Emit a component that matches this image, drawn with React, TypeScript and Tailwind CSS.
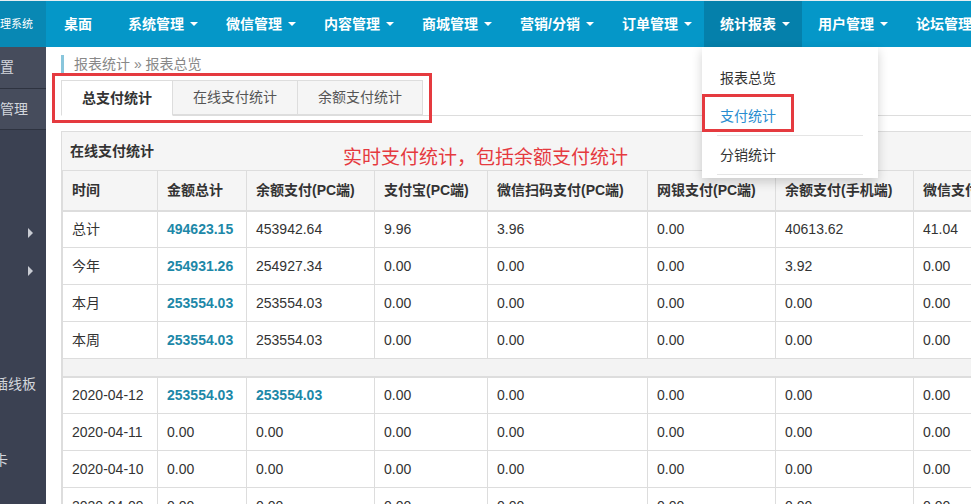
import React from 'react';

const FONT = { fontFamily: '"Liberation Sans", Arial, "Noto Sans CJK SC", sans-serif' };

const NAV = [
  { label: '桌面', caret: false },
  { label: '系统管理', caret: true },
  { label: '微信管理', caret: true },
  { label: '内容管理', caret: true },
  { label: '商城管理', caret: true },
  { label: '营销/分销', caret: true },
  { label: '订单管理', caret: true },
  { label: '统计报表', caret: true, active: true },
  { label: '用户管理', caret: true },
  { label: '论坛管理', caret: false },
];

const COLS = [
  { label: '时间', w: 95 },
  { label: '金额总计', w: 89 },
  { label: '余额支付(PC端)', w: 128 },
  { label: '支付宝(PC端)', w: 113 },
  { label: '微信扫码支付(PC端)', w: 160 },
  { label: '网银支付(PC端)', w: 128 },
  { label: '余额支付(手机端)', w: 138 },
  { label: '微信支付(手机端)', w: 140 },
];

type Row = { cells: string[]; bold?: number[] };

const SUMMARY: Row[] = [
  { cells: ['总计', '494623.15', '453942.64', '9.96', '3.96', '0.00', '40613.62', '41.04'], bold: [1] },
  { cells: ['今年', '254931.26', '254927.34', '0.00', '0.00', '0.00', '3.92', '0.00'], bold: [1] },
  { cells: ['本月', '253554.03', '253554.03', '0.00', '0.00', '0.00', '0.00', '0.00'], bold: [1] },
  { cells: ['本周', '253554.03', '253554.03', '0.00', '0.00', '0.00', '0.00', '0.00'], bold: [1] },
];

const DAILY: Row[] = [
  { cells: ['2020-04-12', '253554.03', '253554.03', '0.00', '0.00', '0.00', '0.00', '0.00'], bold: [1, 2] },
  { cells: ['2020-04-11', '0.00', '0.00', '0.00', '0.00', '0.00', '0.00', '0.00'] },
  { cells: ['2020-04-10', '0.00', '0.00', '0.00', '0.00', '0.00', '0.00', '0.00'] },
  { cells: ['2020-04-09', '0.00', '0.00', '0.00', '0.00', '0.00', '0.00', '0.00'] },
];

function Caret() {
  return (
    <span className="ml-[6px] inline-block h-0 w-0 border-x-4 border-t-4 border-x-transparent border-t-white align-middle" />
  );
}

function DataRow({ row }: { row: Row }) {
  return (
    <tr className="h-[37px]">
      {row.cells.map((c, i) => (
        <td
          key={i}
          className={`border border-[#dddddd] px-[9px] ${
            row.bold?.includes(i) ? 'font-bold text-[#1d88a8]' : 'text-[#333333]'
          }`}
        >
          {c}
        </td>
      ))}
    </tr>
  );
}

export default function App() {
  return (
    <div className="relative h-[504px] w-[971px] overflow-hidden bg-white text-[14px]" style={FONT}>
      {/* top bar */}
      <div className="flex h-[47px] border-t border-[#e6eef2] bg-[#0597c8]">
        <div className="flex w-[46px] shrink-0 items-center justify-end overflow-hidden bg-[#0888b4] pr-[13px] text-[11px] whitespace-nowrap text-white">
          管理系统
        </div>
        <div className="flex shrink-0 pl-[2px]">
          {NAV.map((n) => (
            <div
              key={n.label}
              className={`flex shrink-0 items-center whitespace-nowrap pl-4 font-bold text-white ${
                n.caret ? 'pr-3' : 'pr-5'
              } ${n.active ? 'bg-[#0580ab]' : ''}`}
            >
              {n.label}
              {n.caret ? <Caret /> : null}
            </div>
          ))}
        </div>
      </div>

      <div className="flex h-[457px]">
        {/* sidebar */}
        <div className="flex w-[46px] shrink-0 flex-col overflow-hidden bg-[#3b4152] text-[14px] text-[#d3d6dc]">
          <div className="flex h-[41px] items-center bg-[#464c5c] whitespace-nowrap">置</div>
          <div className="flex h-[42px] items-center border-y border-[#2e3340] bg-[#464c5c] whitespace-nowrap">管理</div>
          <div className="h-[84px]" />
          <div className="flex h-[38px] items-center justify-end pr-[13px]">
            <span className="inline-block h-0 w-0 border-y-[5px] border-l-[5px] border-y-transparent border-l-[#c9ccd3]" />
          </div>
          <div className="flex h-[38px] items-center justify-end pr-[13px]">
            <span className="inline-block h-0 w-0 border-y-[5px] border-l-[5px] border-y-transparent border-l-[#c9ccd3]" />
          </div>
          <div className="h-[82px]" />
          <div className="ml-[-6px] flex h-[24px] items-center whitespace-nowrap">插线板</div>
          <div className="h-[54px]" />
          <div className="ml-[-6px] flex h-[20px] items-center whitespace-nowrap">卡</div>
        </div>

        {/* main */}
        <div className="relative min-w-0 flex-1 overflow-hidden pt-2 pl-[15px]">
          <div className="flex h-[18px] items-center border-l-[3px] border-[#89c6dc] pl-[10px] text-[#888888]">
            报表统计 » 报表总览
          </div>

          <div className="mt-[7px] flex h-[36px] border-b border-[#dddddd]">
            <div className="-mb-px flex items-center border border-b-white border-[#dddddd] bg-white px-5 font-bold text-[#333333]">
              总支付统计
            </div>
            <div className="flex items-center border border-l-0 border-[#dddddd] bg-[#f5f5f5] px-5 text-[#555555]">
              在线支付统计
            </div>
            <div className="flex items-center border border-l-0 border-[#dddddd] bg-[#f5f5f5] px-5 text-[#555555]">
              余额支付统计
            </div>
          </div>

          <div className="mt-[15px] w-[1200px] border border-[#dddddd]">
            <div className="flex h-[38px] items-center bg-[#f5f5f5] px-2 font-bold text-[#333333]">在线支付统计</div>
            <table className="w-[991px] table-fixed border-collapse">
              <colgroup>
                {COLS.map((c) => (
                  <col key={c.label} style={{ width: c.w }} />
                ))}
              </colgroup>
              <thead>
                <tr className="h-[40px] bg-[#f5f5f5]">
                  {COLS.map((c) => (
                    <th
                      key={c.label}
                      className="border border-b-2 border-[#dddddd] px-[9px] text-left font-bold whitespace-nowrap text-[#333333]"
                    >
                      {c.label}
                    </th>
                  ))}
                </tr>
              </thead>
              <tbody>
                {SUMMARY.map((r) => (
                  <DataRow key={r.cells[0]} row={r} />
                ))}
                <tr className="h-[18px] bg-[#f3f3f3]">
                  <td colSpan={8} className="border border-b-2 border-[#dddddd]" />
                </tr>
                {DAILY.map((r) => (
                  <DataRow key={r.cells[0]} row={r} />
                ))}
              </tbody>
            </table>
          </div>

          {/* annotations */}
          <div className="pointer-events-none absolute top-[26px] left-[6px] h-[50px] w-[380px] border-[3px] border-[#e53a3f]" />
          <div className="pointer-events-none absolute top-[97px] left-[297px] text-[19px] whitespace-nowrap text-[#e53a3f]">
            实时支付统计，包括余额支付统计
          </div>
        </div>
      </div>

      {/* dropdown */}
      <div className="absolute top-[47px] left-[702px] w-[176px] bg-white pt-[12px] pb-[3px] shadow-[0_4px_10px_rgba(0,0,0,0.18)]">
        <div className="flex h-[38px] items-center px-[18px] text-[#333333]">报表总览</div>
        <div className="relative flex h-[38px] items-center px-[18px] text-[#2a8dd0]">
          支付统计
          <div className="absolute top-[-3px] left-0 h-[38px] w-[92px] border-[3px] border-[#e53a3f]" />
        </div>
        <div className="mx-[15px] h-px bg-[#e5e5e5]" />
        <div className="flex h-[38px] items-center px-[18px] text-[#333333]">分销统计</div>
        <div className="mx-[15px] h-px bg-[#e5e5e5]" />
      </div>
    </div>
  );
}
